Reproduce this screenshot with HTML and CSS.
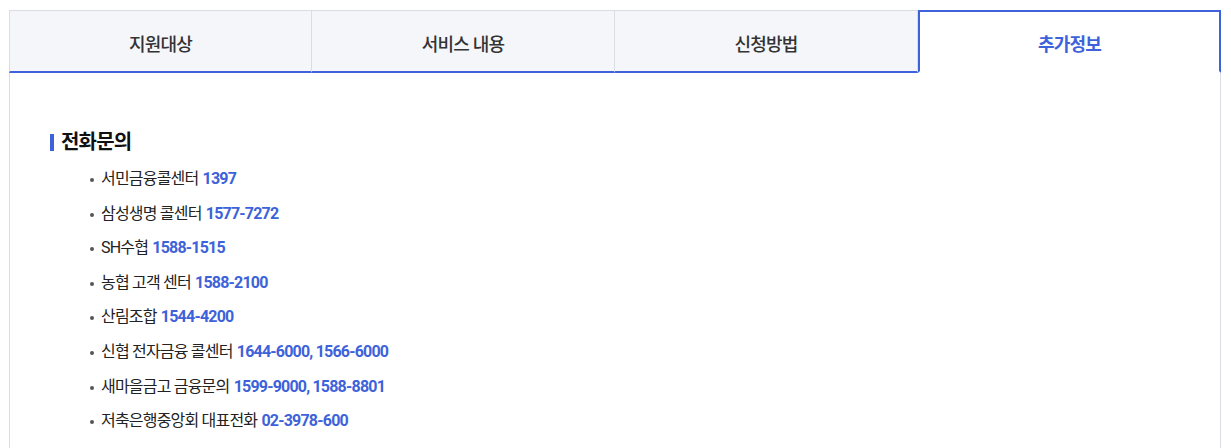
FILE: index.html
```html
<!DOCTYPE html>
<html lang="ko">

<head>
    <meta charset="UTF-8">
    <meta name="viewport" content="width=device-width, initial-scale=1.0">
    <link rel="stylesheet" href="styles.css">
    <title>추가정보</title>
</head>

<body>
    <div class="tab-wrap">
        <!-- 탭 메뉴 -->
        <ul class="tab-list">
            <li class="tab-item">지원대상</li>
            <li class="tab-item">서비스 내용</li>
            <li class="tab-item">신청방법</li>
            <li class="tab-item active">추가정보</li>
        </ul>

        <!-- 탭 내용 -->
        <div class="tab-content">
            <h3 class="info-title">전화문의</h3>
            <ul class="call-list">
                <li>서민금융콜센터 <strong>1397</strong></li>
                <li>삼성생명 콜센터 <strong>1577-7272</strong></li>
                <li>SH수협 <strong>1588-1515</strong></li>
                <li>농협 고객 센터 <strong>1588-2100</strong></li>
                <li>산림조합 <strong>1544-4200</strong></li>
                <li>신협 전자금융 콜센터 <strong>1644-6000, 1566-6000</strong></li>
                <li>새마을금고 금융문의 <strong>1599-9000, 1588-8801</strong></li>
                <li>저축은행중앙회 대표전화 <strong>02-3978-600</strong></li>
            </ul>
        </div>
    </div>
</body>

</html>
```

FILE: styles.css
```css
/* 전체 */
* {
    box-sizing: border-box;
}

body {
    margin: 0;
    padding: 10px 10px 0 9px;
    font-family: Roboto, "Noto Sans CJK KR", sans-serif;
    color: #222;
    background: #fff;
    letter-spacing: -0.05em;
}

.tab-wrap {
    width: 1212px;
}

/* 탭 메뉴 */
.tab-list {
    display: flex;
    margin: 0;
    padding: 0;
    list-style: none;
}

.tab-item {
    flex: none;
    width: 25%;
    height: 63px;
    padding-top: 3px;
    display: flex;
    justify-content: center;
    align-items: center;
    background-color: #f5f6fa;
    border-top: 1px solid #dcdde2;
    border-right: 1px solid #dcdde2;
    border-bottom: 2px solid #3d62d9;
    font-size: 18px;
    font-weight: 500;
    color: #333;
}

.tab-item:first-child {
    border-left: 1px solid #dcdde2;
}

.tab-item.active {
    background-color: #fff;
    border: 2px solid #3d62d9;
    border-bottom: 2px solid #fff;
    color: #3d62d9;
    font-weight: 700;
}

/* 탭 내용 */
.tab-content {
    border-left: 1px solid #dcdde2;
    border-right: 1px solid #dcdde2;
    padding: 56px 40px 20px 40px;
    height: 380px;
}

.info-title {
    position: relative;
    margin: 0;
    padding-left: 11px;
    font-size: 20px;
    line-height: 26px;
    font-weight: 700;
    color: #111;
}

.info-title::before {
    content: "";
    position: absolute;
    left: 0;
    top: 5px;
    width: 4px;
    height: 17px;
    background-color: #3d62d9;
}

.call-list {
    margin: 7px 0 0 0;
    padding: 0 0 0 40px;
    list-style: none;
}

.call-list li {
    position: relative;
    padding-left: 11px;
    font-size: 16px;
    line-height: 34.6px;
}

.call-list li::before {
    content: "";
    position: absolute;
    left: 0;
    top: 16px;
    width: 4px;
    height: 4px;
    border-radius: 50%;
    background-color: #555;
}

.call-list strong {
    margin-left: 1px;
    color: #3d62d9;
    font-weight: 700;
}
```
